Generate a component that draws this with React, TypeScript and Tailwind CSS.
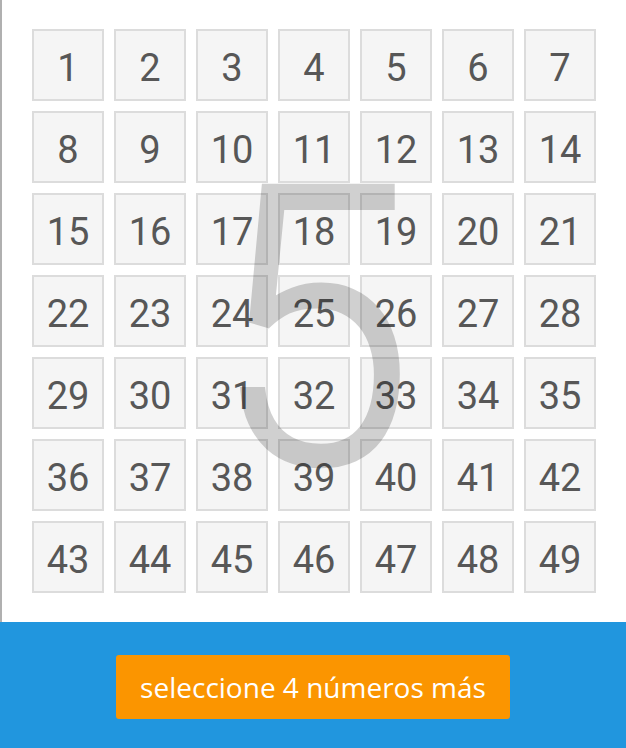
import React from 'react'

const numbers = Array.from({ length: 49 }, (_, i) => i + 1)

export default function App() {
  return (
    <div className="w-[626px] h-[748px] flex flex-col bg-white">
      {/* Number board */}
      <div className="relative border-l-2 border-[#b0b0b0] pl-[30px] pt-[29px] pb-[29px]">
        <div className="grid grid-cols-[repeat(7,72px)] gap-[10px]">
          {numbers.map((n) => (
            <div
              key={n}
              className="h-[72px] flex items-center justify-center pt-[5px] border-2 border-[#dcdcdc] bg-[#f5f5f5] text-[#575757] text-[38px] leading-none font-['Roboto',sans-serif]"
            >
              {n}
            </div>
          ))}
        </div>

        {/* Countdown digit */}
        <div className="absolute left-[211px] top-[136px] origin-left scale-x-[0.93] opacity-[0.18] pointer-events-none select-none text-[388px] leading-none font-light text-black [-webkit-text-stroke:5px_black] font-['Roboto',sans-serif]">
          5
        </div>
      </div>

      {/* Footer */}
      <div className="flex-1 bg-[#2196de] flex justify-center pt-[33px]">
        <button className="w-[394px] h-[64px] rounded-[3px] bg-[#fb9500] text-white text-[28px] font-['Open_Sans',sans-serif]">
          seleccione 4 números más
        </button>
      </div>
    </div>
  )
}
